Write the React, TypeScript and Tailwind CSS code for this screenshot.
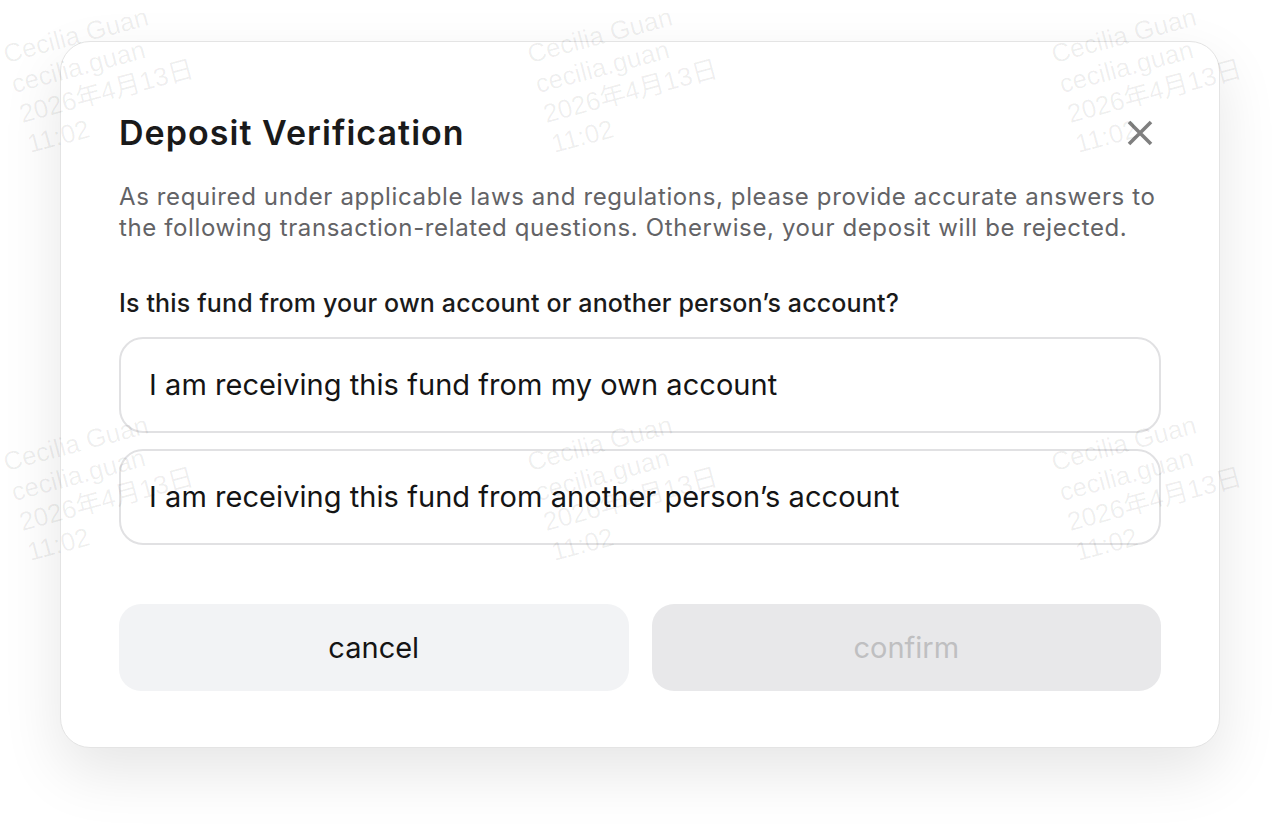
const marks = [
  { left: 0, top: 0 },
  { left: 524, top: 0 },
  { left: 1048, top: 0 },
  { left: 0, top: 408 },
  { left: 524, top: 408 },
  { left: 1048, top: 408 },
];

const Watermark = ({ left, top }: { left: number; top: number }) => (
  <div
    className="absolute w-[220px] origin-top-left -rotate-[15deg] font-['Liberation_Sans','Noto_Sans_CJK_SC',sans-serif] text-[26px] leading-[31px] text-black/[0.065] whitespace-nowrap"
    style={{ left: left + 0, top: top + 40 }}
  >
    <div>Cecilia Guan</div>
    <div>cecilia.guan</div>
    <div>2026年4月13日</div>
    <div>11:02</div>
  </div>
);

const Option = ({ label }: { label: string }) => (
  <button className="flex h-[96px] w-full items-center rounded-[24px] border-2 border-[#e1e1e3] bg-white px-[28px] text-left text-[29px] tracking-[0.05px] text-[#141414]">
    {label}
  </button>
);

const CloseIcon = () => (
  <svg width="26" height="26" viewBox="0 0 26 26" className="mr-[8px]">
    <path d="M2 2 L24 24 M24 2 L2 24" stroke="#7f7f7f" strokeWidth="3.6" fill="none" />
  </svg>
);

export default function App() {
  return (
    <div className="relative h-[826px] w-full overflow-hidden bg-white font-['Inter',sans-serif]">
      <div className="px-[60px] pt-[41px]">
        <div className="flex h-[707px] flex-col rounded-[30px] border border-[#e4e4e4] bg-white px-[58px] pt-[71px] shadow-[0_24px_60px_rgba(0,0,0,0.10)]">
          <div className="flex items-center justify-between">
            <h2 className="text-[34px] font-semibold leading-[40px] tracking-[1.05px] text-[#1a1a1a]">
              Deposit Verification
            </h2>
            <CloseIcon />
          </div>
          <p className="mt-[28px] text-[24px] leading-[31px] tracking-[0.62px] text-[#636366]">
            As required under applicable laws and regulations, please provide accurate answers to
            <br />
            the following transaction-related questions. Otherwise, your deposit will be rejected.
          </p>
          <p className="mt-[45px] text-[25px] font-medium leading-[31px] tracking-[0.15px] text-[#1a1a1a]">
            Is this fund from your own account or another person’s account?
          </p>
          <div className="mt-[18px] flex flex-col gap-[16px]">
            <Option label="I am receiving this fund from my own account" />
            <Option label="I am receiving this fund from another person’s account" />
          </div>
          <div className="mt-[59px] flex gap-[23px]">
            <button className="h-[87px] flex-1 rounded-[22px] bg-[#f2f3f5] text-[29px] text-[#141414]">cancel</button>
            <button className="h-[87px] flex-1 rounded-[22px] bg-[#e8e8ea] text-[29px] text-[#bfbfc1]">confirm</button>
          </div>
        </div>
      </div>
      <div className="pointer-events-none absolute inset-0">
        {marks.map((m, i) => (
          <Watermark key={i} left={m.left} top={m.top} />
        ))}
      </div>
    </div>
  );
}
